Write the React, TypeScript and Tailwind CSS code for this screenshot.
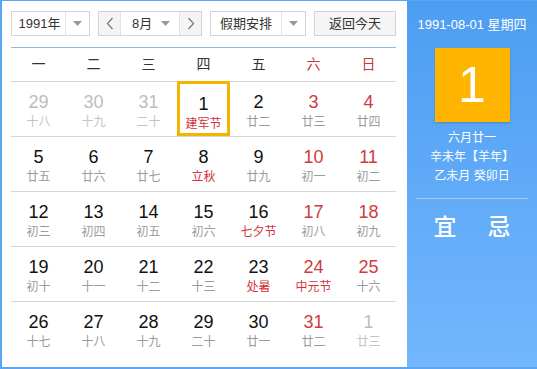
import React from 'react';

type Day = { d: number; l: string; muted?: boolean; fest?: boolean; weekend?: boolean; sel?: boolean };

const weeks: Day[][] = [
  [
    { d: 29, l: '十八', muted: true },
    { d: 30, l: '十九', muted: true },
    { d: 31, l: '二十', muted: true },
    { d: 1, l: '建军节', fest: true, sel: true },
    { d: 2, l: '廿二' },
    { d: 3, l: '廿三', weekend: true },
    { d: 4, l: '廿四', weekend: true },
  ],
  [
    { d: 5, l: '廿五' },
    { d: 6, l: '廿六' },
    { d: 7, l: '廿七' },
    { d: 8, l: '立秋', fest: true },
    { d: 9, l: '廿九' },
    { d: 10, l: '初一', weekend: true },
    { d: 11, l: '初二', weekend: true },
  ],
  [
    { d: 12, l: '初三' },
    { d: 13, l: '初四' },
    { d: 14, l: '初五' },
    { d: 15, l: '初六' },
    { d: 16, l: '七夕节', fest: true },
    { d: 17, l: '初八', weekend: true },
    { d: 18, l: '初九', weekend: true },
  ],
  [
    { d: 19, l: '初十' },
    { d: 20, l: '十一' },
    { d: 21, l: '十二' },
    { d: 22, l: '十三' },
    { d: 23, l: '处暑', fest: true },
    { d: 24, l: '中元节', fest: true, weekend: true },
    { d: 25, l: '十六', weekend: true },
  ],
  [
    { d: 26, l: '十七' },
    { d: 27, l: '十八' },
    { d: 28, l: '十九' },
    { d: 29, l: '二十' },
    { d: 30, l: '廿一' },
    { d: 31, l: '廿二', weekend: true },
    { d: 1, l: '廿三', muted: true },
  ],
];

const weekdays = ['一', '二', '三', '四', '五', '六', '日'];

const Caret = () => (
  <svg width="9" height="5" viewBox="0 0 9 5">
    <path d="M0 0 L9 0 L4.5 5 Z" fill="#999" />
  </svg>
);

const Chevron = ({ right }: { right?: boolean }) => (
  <svg width="8" height="13" viewBox="0 0 8 13">
    <polyline
      points={right ? '1.5,1 6.5,6.5 1.5,12' : '6.5,1 1.5,6.5 6.5,12'}
      fill="none"
      stroke="#777"
      strokeWidth="1.2"
    />
  </svg>
);

const App: React.FC = () => {
  return (
    <div
      className="flex w-[537px] h-[369px] border-l-2 border-t border-b-2 border-[#5ba6f1] bg-white text-[#333]"
      style={{ fontFamily: '"Liberation Sans", Arial, "Noto Sans CJK SC", sans-serif' }}
    >
      {/* calendar */}
      <div className="w-[405px] pl-[9px] pr-[11px] pt-[10px]">
        <div className="flex h-[25px] text-[13px]">
          <div className="flex w-[79px] border border-[#d4d4d4] bg-white">
            <div className="flex-1 flex items-center justify-center pl-[2px]">1991年</div>
            <div className="w-[24px] border-l border-[#e2e2e2] flex items-center justify-center">
              <Caret />
            </div>
          </div>
          <div className="flex w-[104px] ml-[8px] border border-[#d4d4d4]">
            <div className="w-[22px] bg-[#f4f4f4] border-r border-[#e2e2e2] flex items-center justify-center">
              <Chevron />
            </div>
            <div className="flex-1 flex items-center pl-[11px]">
              <span className="flex-1">8月</span>
              <span className="mr-[9px] flex"><Caret /></span>
            </div>
            <div className="w-[22px] bg-[#f4f4f4] border-l border-[#e2e2e2] flex items-center justify-center">
              <Chevron right />
            </div>
          </div>
          <div className="flex w-[96px] ml-[8px] border border-[#d4d4d4]">
            <div className="flex-1 flex items-center justify-center">假期安排</div>
            <div className="w-[24px] border-l border-[#e2e2e2] flex items-center justify-center">
              <Caret />
            </div>
          </div>
          <div className="w-[82px] ml-[8px] border border-[#d4d4d4] bg-[#f5f5f5] flex items-center justify-center">
            返回今天
          </div>
        </div>

        <div className="mt-[11px] h-px bg-[#8db9e2]" />

        <div className="grid grid-cols-7 h-[33px] items-center text-[14px]">
          {weekdays.map((w, i) => (
            <div key={w} className={`text-center ${i >= 5 ? 'text-[#c9353d]' : 'text-[#333]'}`}>
              {w}
            </div>
          ))}
        </div>

        {weeks.map((week, wi) => (
          <div key={wi} className="grid grid-cols-7 h-[55px] border-t border-[#d6d6d6]">
            {week.map((day, di) => {
              const numColor = day.muted ? 'text-[#bdbdbd]' : day.weekend ? 'text-[#d03a3f]' : 'text-[#111]';
              const lunColor = day.fest ? 'text-[#d0343c]' : day.muted ? 'text-[#c4c4c4]' : 'text-[#9a9a9a]';
              return (
                <div
                  key={di}
                  className={`flex flex-col items-center pt-[9px] ${day.sel ? 'mx-[1px] -mt-px border-[3px] border-[#f4b400] pt-[8px]' : ''}`}
                >
                  <span className={`text-[18px] leading-[22px] ${numColor}`}>{day.d}</span>
                  <span className={`text-[12px] leading-[16px] mt-[1px] ${lunColor}`}>{day.l}</span>
                </div>
              );
            })}
          </div>
        ))}
      </div>

      {/* side panel */}
      <div className="flex-1 flex flex-col items-center bg-gradient-to-b from-[#4d9df2] to-[#72b7fd] text-white">
        <div className="mt-[15px] text-[13px] leading-[18px]">1991-08-01 星期四</div>
        <div className="mt-[14px] w-[75px] h-[74px] bg-[#ffb400] shadow-[0_1px_2px_rgba(0,0,0,0.2)] flex items-center justify-center text-[50px] leading-none">
          1
        </div>
        <div className="mt-[7px] text-[12px] leading-[19px] text-center">
          <div>六月廿一</div>
          <div>辛未年【羊年】</div>
          <div>乙未月 癸卯日</div>
        </div>
        <div className="mt-[12px] w-[112px] h-px bg-white/40" />
        <div className="mt-[14px] flex gap-[31px] text-[23px] font-medium leading-[28px]">
          <span>宜</span>
          <span>忌</span>
        </div>
      </div>
    </div>
  );
};

export default App;
